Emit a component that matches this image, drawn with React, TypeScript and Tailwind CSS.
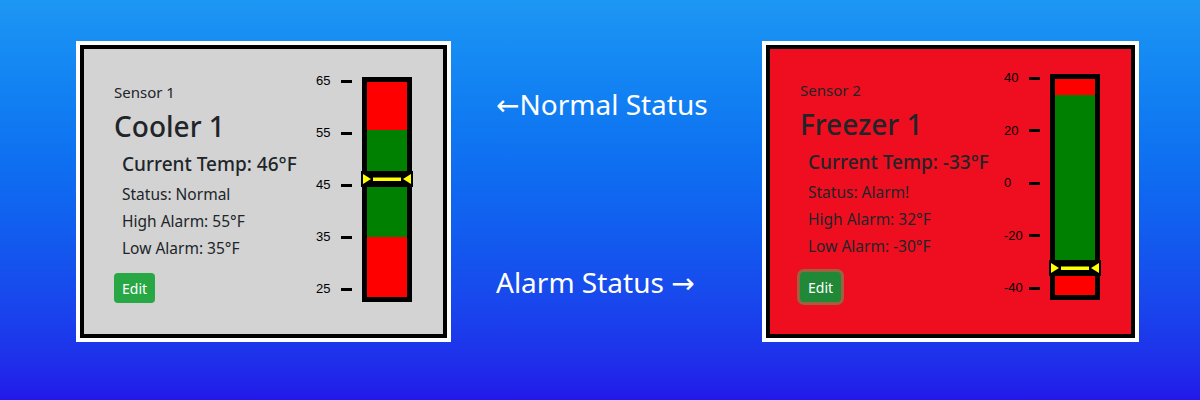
type Segment = { color: string; h: number };

type Sensor = {
  label: string;
  name: string;
  temp: string;
  status: string;
  high: string;
  low: string;
  alarm: boolean;
  ticks: string[];
  segments: Segment[];
  pointerTop: number;
};

const sensors: Sensor[] = [
  {
    label: "Sensor 1",
    name: "Cooler 1",
    temp: "46°F",
    status: "Normal",
    high: "55°F",
    low: "35°F",
    alarm: false,
    ticks: ["65", "55", "45", "35", "25"],
    segments: [
      { color: "bg-[#ff0000]", h: 48 },
      { color: "bg-[#008000]", h: 107 },
      { color: "bg-[#ff0000]", h: 60 },
    ],
    pointerTop: 89,
  },
  {
    label: "Sensor 2",
    name: "Freezer 1",
    temp: "-33°F",
    status: "Alarm!",
    high: "32°F",
    low: "-30°F",
    alarm: true,
    ticks: ["40", "20", "0", "-20", "-40"],
    segments: [
      { color: "bg-[#ff0000]", h: 16 },
      { color: "bg-[#008000]", h: 167 },
      { color: "bg-[#ff0000]", h: 33 },
    ],
    pointerTop: 181,
  },
];

const Pointer = ({ top }: { top: number }) => (
  <svg
    className="absolute left-[-6px]"
    style={{ top }}
    width="52"
    height="16"
    viewBox="0 0 52 16"
  >
    <rect x="0" y="0" width="52" height="16" fill="#000" />
    <polygon points="2,3 10,8 2,13" fill="#ffff00" />
    <polygon points="50,3 42,8 50,13" fill="#ffff00" />
    <rect x="12" y="6.5" width="28" height="3.5" fill="#ffff00" />
  </svg>
);

const Gauge = ({ s }: { s: Sensor }) => (
  <div className={`flex items-start ${s.alarm ? "mt-[22px]" : "mt-[25px]"}`}>
    <div
      className={`flex flex-col justify-between ${s.alarm ? "h-[224px]" : "h-[222px]"}`}
      style={{ fontFamily: '"Liberation Sans", Arial, sans-serif' }}
    >
      {s.ticks.map((t) => (
        <div key={t} className="flex items-center h-[14px]">
          <span className="w-[25px] text-[13px] leading-[14px] text-black">{t}</span>
          <span className="w-[11px] h-[3px] bg-black" />
        </div>
      ))}
    </div>
    <div
      className={`relative ml-[10px] mt-[3px] w-[50px] border-[5px] border-black flex flex-col ${
        s.alarm ? "h-[226px]" : "h-[225px]"
      }`}
    >
      {s.segments.map((seg, i) => (
        <div key={i} className={`${seg.color} w-full`} style={{ height: seg.h }} />
      ))}
      <Pointer top={s.pointerTop} />
    </div>
  </div>
);

const SensorCard = ({ s }: { s: Sensor }) => (
  <div className={`bg-white p-[4px] h-[301px] ${s.alarm ? "w-[377px]" : "w-[375px]"}`}>
    <div
      className={`h-full border-[4px] border-black flex justify-between pl-[30px] pr-[31px] text-[#212529] ${
        s.alarm ? "bg-[#ef0e1f]" : "bg-[#d3d3d3]"
      }`}
      style={{ fontFamily: '"Noto Sans", "Open Sans", sans-serif' }}
    >
      <div className={`flex flex-col items-start ${s.alarm ? "pt-[31px]" : "pt-[33px]"}`}>
        <div className="text-[15px] leading-[20px]">{s.label}</div>
        <div className="mt-[7px] text-[28px] leading-[34px] font-medium">{s.name}</div>
        <div className="ml-[8px] mt-[8px] text-[19px] leading-[26px] font-medium whitespace-nowrap">
          Current Temp: {s.temp}
        </div>
        <div className="ml-[8px] mt-[3px] text-[15.5px] leading-[28px]">Status: {s.status}</div>
        <div className="ml-[8px] text-[15.5px] leading-[27px]">High Alarm: {s.high}</div>
        <div className="ml-[8px] text-[15.5px] leading-[27px]">Low Alarm: {s.low}</div>
        {s.alarm ? (
          <button className="mt-[12px] h-[30px] px-[8px] rounded-[4px] bg-[#218838] text-white text-[14px] ring-[3px] ring-[rgba(72,180,97,0.5)]">
            Edit
          </button>
        ) : (
          <button className="mt-[11px] h-[30px] px-[8px] rounded-[4px] bg-[#28a745] text-white text-[14px]">
            Edit
          </button>
        )}
      </div>
      <Gauge s={s} />
    </div>
  </div>
);

export default function App() {
  return (
    <div className="w-[1200px] h-[400px] bg-linear-to-b from-[#1d97f4] to-[#2317e9] flex items-start pt-[41px] pl-[76px]">
      <SensorCard s={sensors[0]} />
      <div
        className="w-[311px] pl-[45px] text-white text-[28px] leading-[36px]"
        style={{ fontFamily: '"Noto Sans", "DejaVu Sans", sans-serif' }}
      >
        <div className="mt-[45px]">←Normal Status</div>
        <div className="mt-[142px]">Alarm Status →</div>
      </div>
      <SensorCard s={sensors[1]} />
    </div>
  );
}
